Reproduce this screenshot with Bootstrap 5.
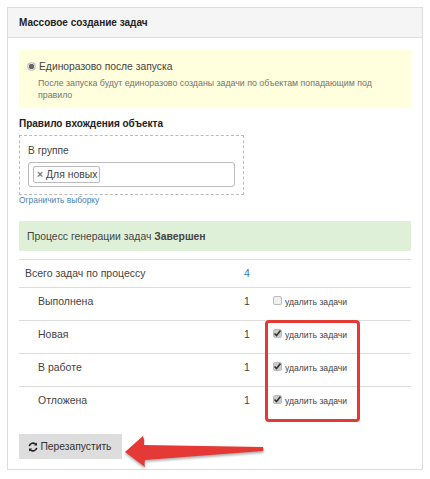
<!DOCTYPE html>
<html lang="ru">
<head>
    <meta charset="UTF-8">
    <meta name="viewport" content="width=device-width, initial-scale=1.0">
    <title>Массовое создание задач</title>
    <link href="https://cdn.jsdelivr.net/npm/bootstrap@5.3.3/dist/css/bootstrap.min.css" rel="stylesheet">
    <script src="https://cdn.jsdelivr.net/npm/bootstrap@5.3.3/dist/js/bootstrap.bundle.min.js"></script>
    <style>
        body {
            background: #fff;
            color: #333;
            font-family: "Liberation Sans", Arial, sans-serif;
            font-size: 10.3px;
            line-height: 1.2;
            padding: 7px;
            width: 430px;
            height: 479px;
            overflow: hidden;
        }
        .task-panel {
            position: relative;
            width: 416px;
            height: 463px;
            border: 1px solid #ddd;
            border-radius: 0;
        }
        .task-panel .card-header {
            height: 30px;
            padding: 9px 11px 0;
            background: #f5f5f5;
            border-bottom: 1px solid #ddd;
            border-radius: 0;
            font-size: 10px;
            line-height: 12px;
            font-weight: 700;
            color: #222;
        }
        .task-panel .card-body {
            padding: 12px 11px 0;
        }
        .once-box {
            height: 58px;
            padding: 9px 8px 0;
            background: #ffffdd;
        }
        .once-title {
            padding-top: 1px;
            font-size: 10.3px;
            line-height: 13px;
            color: #444;
        }
        .once-radio {
            appearance: none;
            width: 9px;
            height: 9px;
            margin: 0 3px 0 0;
            border: 1px solid #bbb;
            border-radius: 50%;
            background: radial-gradient(circle, #666 0, #666 2.5px, #e6e6e6 3px);
        }
        .once-hint {
            margin-top: 4px;
            padding-left: 11px;
            font-size: 8.8px;
            line-height: 12px;
            color: #737373;
        }
        .rule-title {
            margin-top: 10px;
            font-size: 10px;
            line-height: 12px;
            font-weight: 700;
            color: #222;
        }
        .rule-box {
            width: 225px;
            height: 60px;
            margin-top: 5px;
            padding: 8px 8px 0;
            border: 1px dashed #bbb;
        }
        .rule-label {
            font-size: 10.2px;
            line-height: 13px;
            color: #444;
        }
        .rule-select {
            height: 25px;
            margin-top: 5px;
            padding: 3px 4px;
            border: 1px solid #bbb;
            border-radius: 3px;
        }
        .rule-tag {
            height: 17px;
            padding: 0 2px 0 3px;
            border: 1px solid #bbb;
            border-radius: 2px;
            font-size: 10.4px;
            line-height: 15px;
            color: #444;
        }
        .rule-tag b {
            color: #777;
            margin-right: 3px;
        }
        .limit-link {
            display: block;
            font-size: 8.4px;
            line-height: 11px;
            color: #4a7fb5;
            text-decoration: none;
        }
        .status-box {
            height: 30px;
            margin-top: 15px;
            padding: 9px 8px 0;
            font-size: 10.4px;
            line-height: 13px;
            background: #dff0d8;
            color: #444;
        }
        .task-table {
            margin: 8px 0 0;
            table-layout: fixed;
            width: 392px;
            font-size: 10.5px;
            color: #444;
        }
        .task-table td {
            padding: 0;
            height: 33px;
            border-top: 1px solid #ddd;
            border-bottom: 0;
            color: #444;
            vertical-align: top;
            padding-top: 7px;
            line-height: 13px;
        }
        .task-table tr.total-row td {
            height: 28px;
            padding-top: 7px;
        }
        .name-cell {
            width: 225px;
            padding-left: 19px !important;
        }
        .total-row .name-cell {
            padding-left: 6px !important;
        }
        .num-cell {
            width: 29px;
        }
        .total-row .num-cell {
            color: #337ab7 !important;
        }
        .del-check {
            appearance: none;
            display: inline-block;
            width: 9px;
            height: 9px;
            margin: 1px 3px 0 0;
            border: 1px solid #bbb;
            border-radius: 2px;
            background: #f0f0f0;
            vertical-align: top;
        }
        .del-check:checked {
            background: #ccc url("data:image/svg+xml,%3Csvg xmlns='http://www.w3.org/2000/svg' viewBox='0 0 9 9'%3E%3Cpath d='M1.5 4.5l2 2 4-5' fill='none' stroke='%23333' stroke-width='1.6'/%3E%3C/svg%3E") center / 9px 9px no-repeat;
        }
        .del-label {
            display: inline-block;
            margin-top: 1px;
            font-size: 8.6px;
            line-height: 13px;
            color: #444;
        }
        .restart-btn {
            display: block;
            width: 103px;
            height: 25px;
            margin-top: 14px;
            padding: 0 2px 0 0;
            background: #ddd;
            border: 0;
            border-radius: 0;
            font-size: 10.3px;
            line-height: 25px;
            color: #333;
        }
        .mark-frame {
            position: absolute;
            left: 257px;
            top: 312px;
            width: 95px;
            height: 102px;
            border: 3px solid #e53935;
            border-radius: 4px;
        }
        .mark-arrow {
            position: absolute;
            left: 116px;
            top: 426px;
            filter: drop-shadow(0 2px 1px rgba(0,0,0,.3));
        }
    </style>
</head>
<body>

<div class="card task-panel">
    <div class="card-header">Массовое создание задач</div>
    <div class="card-body">
        <div class="once-box">
            <div class="once-title d-flex align-items-center">
                <input class="once-radio" type="radio" name="mode" checked>
                Единоразово после запуска
            </div>
            <div class="once-hint">После запуска будут единоразово созданы задачи по объектам попадающим под правило</div>
        </div>

        <div class="rule-title">Правило вхождения объекта</div>
        <div class="rule-box">
            <div class="rule-label">В группе</div>
            <div class="rule-select d-flex align-items-start">
                <span class="rule-tag"><b>×</b>Для новых</span>
            </div>
        </div>
        <a class="limit-link" href="#">Ограничить выборку</a>

        <div class="status-box">Процесс генерации задач <b>Завершен</b></div>

        <table class="table task-table">
            <tbody>
                <tr class="total-row">
                    <td class="name-cell">Всего задач по процессу</td>
                    <td class="num-cell">4</td>
                    <td></td>
                </tr>
                <tr>
                    <td class="name-cell">Выполнена</td>
                    <td class="num-cell">1</td>
                    <td><input class="del-check" type="checkbox"><span class="del-label">удалить задачи</span></td>
                </tr>
                <tr>
                    <td class="name-cell">Новая</td>
                    <td class="num-cell">1</td>
                    <td><input class="del-check" type="checkbox" checked><span class="del-label">удалить задачи</span></td>
                </tr>
                <tr>
                    <td class="name-cell">В работе</td>
                    <td class="num-cell">1</td>
                    <td><input class="del-check" type="checkbox" checked><span class="del-label">удалить задачи</span></td>
                </tr>
                <tr>
                    <td class="name-cell">Отложена</td>
                    <td class="num-cell">1</td>
                    <td><input class="del-check" type="checkbox" checked><span class="del-label">удалить задачи</span></td>
                </tr>
            </tbody>
        </table>

        <button class="btn restart-btn" type="button">
            <svg width="10" height="10" viewBox="0 0 12 12" fill="none" stroke="#222" stroke-width="2"><path d="M1.5 5a4.6 4.6 0 0 1 8-2"/><path d="M10.5 7a4.6 4.6 0 0 1-8 2"/><path d="M10.8 .6v3.6H7.2z" fill="#222" stroke="none"/><path d="M1.2 11.4V7.8h3.6z" fill="#222" stroke="none"/></svg>
            Перезапустить
        </button>
    </div>

    <div class="mark-frame"></div>
    <svg class="mark-arrow" width="142" height="36" viewBox="0 0 142 36">
        <path d="M1 18 L19 2 Q21 6 20 11 L139 13 Q140 15 139 17 L21 26 Q20 30 21 33 Z" fill="#e53935"/>
    </svg>
</div>

</body>
</html>
